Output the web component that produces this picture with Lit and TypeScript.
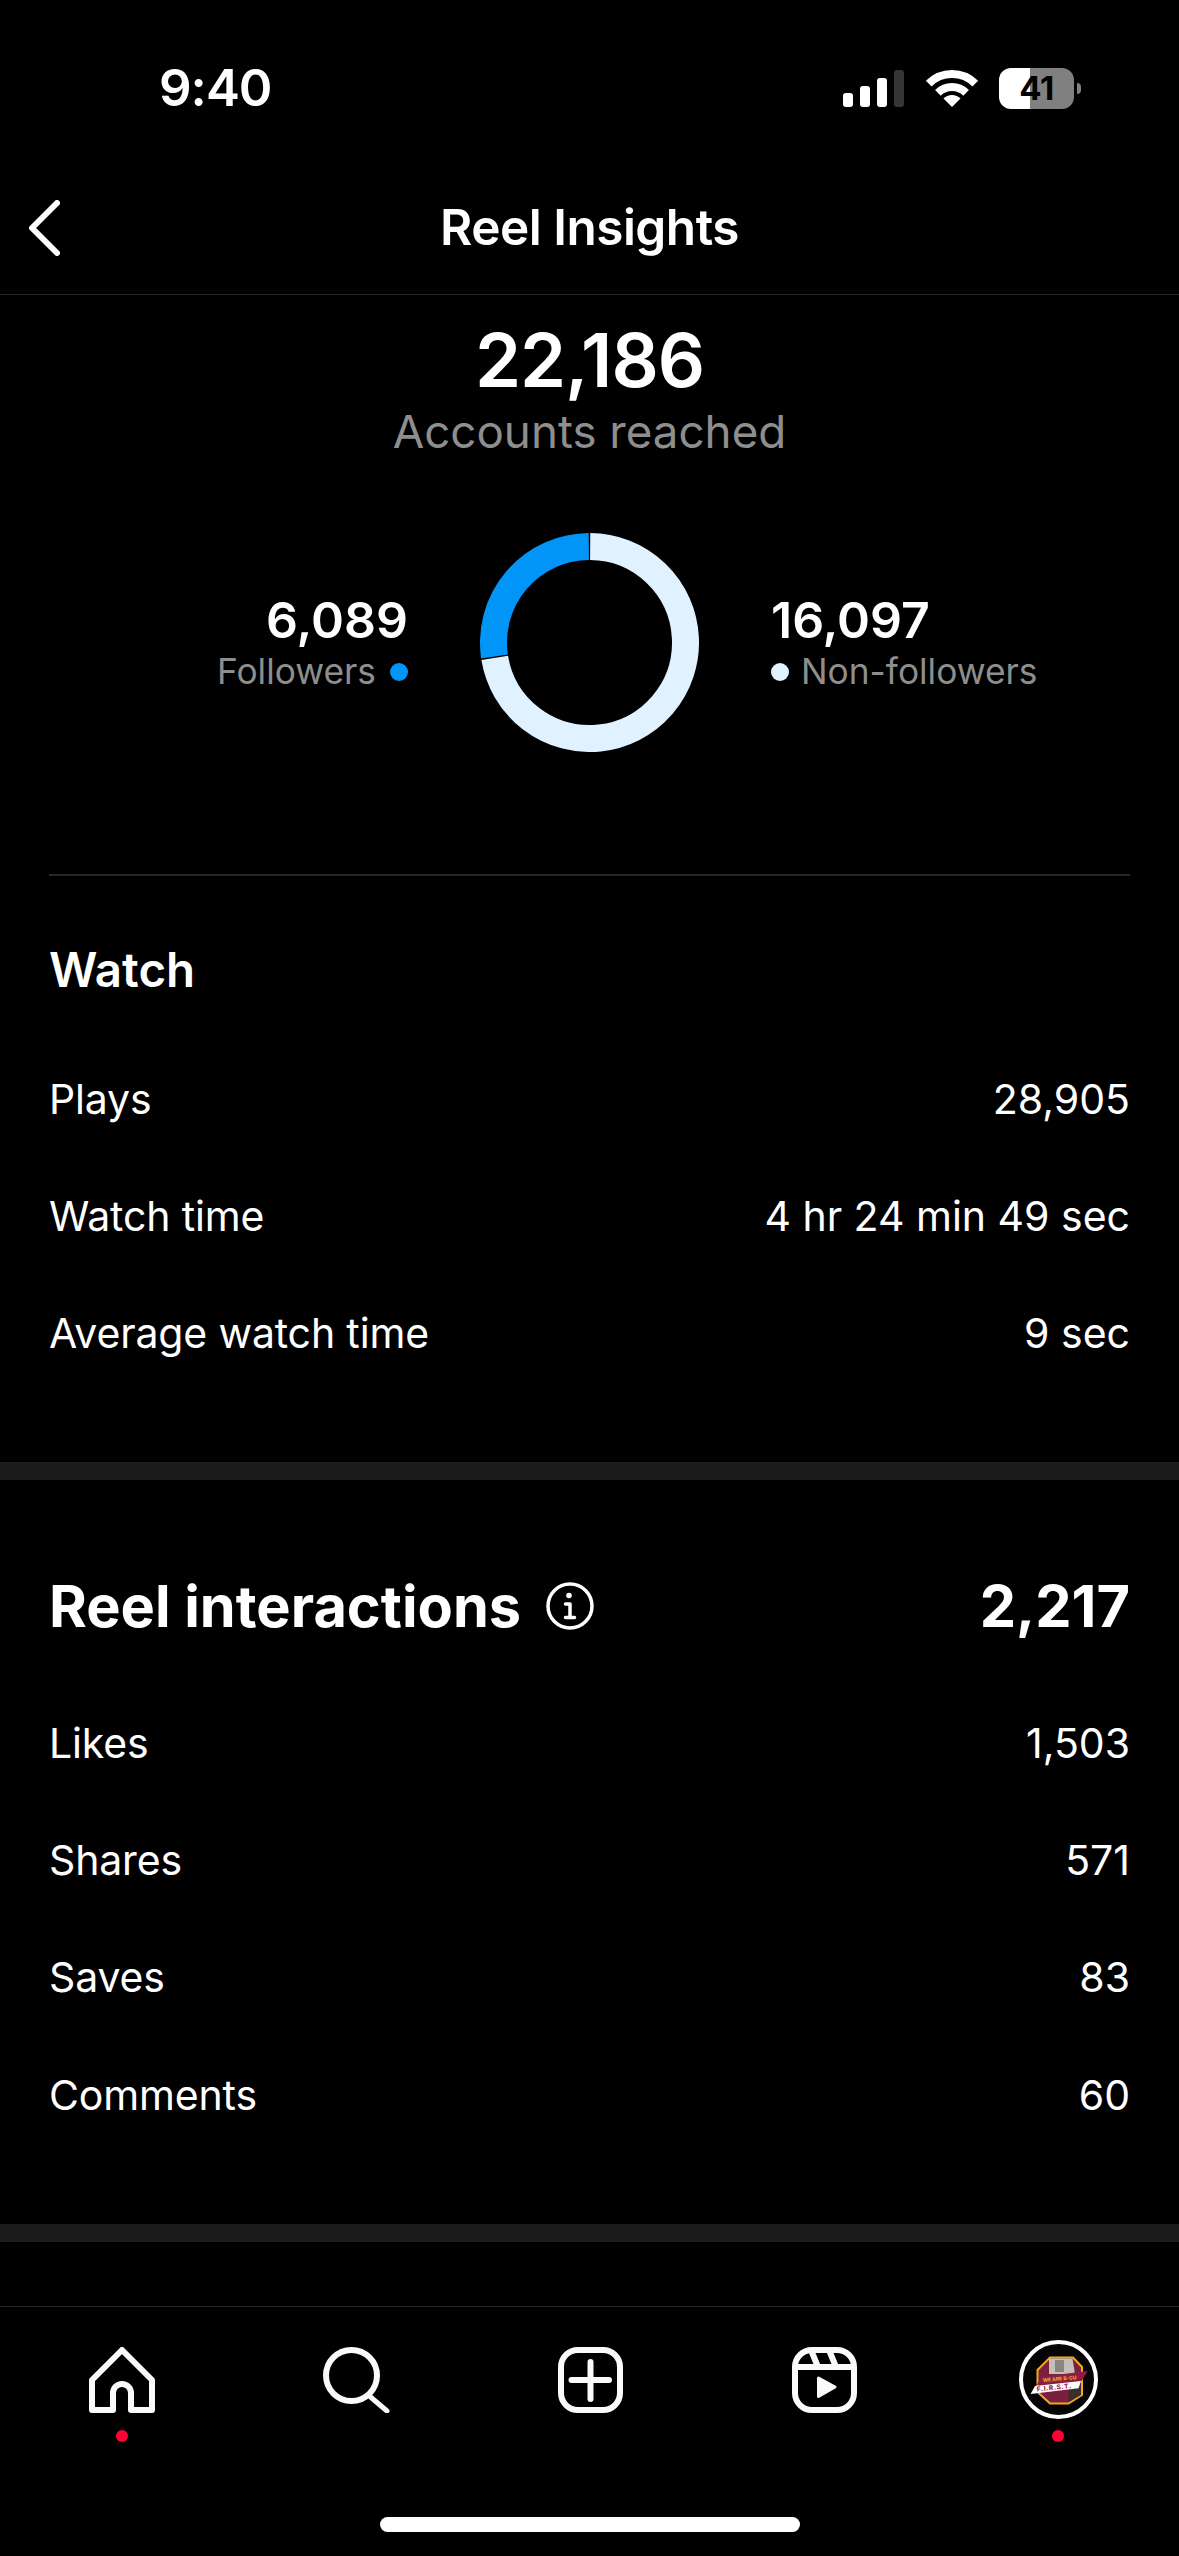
import { LitElement, html, css, svg } from "lit";
import { customElement } from "lit/decorators.js";

interface Stat {
  label: string;
  value: string;
}

const WATCH: Stat[] = [
  { label: "Plays", value: "28,905" },
  { label: "Watch time", value: "4 hr 24 min 49 sec" },
  { label: "Average watch time", value: "9 sec" },
];

const INTERACTIONS: Stat[] = [
  { label: "Likes", value: "1,503" },
  { label: "Shares", value: "571" },
  { label: "Saves", value: "83" },
  { label: "Comments", value: "60" },
];

const FOLLOWERS = 6089;
const NON_FOLLOWERS = 16097;

// arc of the donut, clockwise from `from` to `to` in degrees, 0 at the top
function arc(from: number, to: number, r: number) {
  const pt = (a: number) => {
    const rad = ((a - 90) * Math.PI) / 180;
    return `${109.5 + r * Math.cos(rad)} ${109.5 + r * Math.sin(rad)}`;
  };
  const large = to - from > 180 ? 1 : 0;
  return `M${pt(from)} A${r} ${r} 0 ${large} 1 ${pt(to)}`;
}

const homeIcon = svg`<svg width="66" height="66" viewBox="0 0 66 66" fill="none" stroke="#fafafa" stroke-width="6" stroke-linejoin="round"><path d="M33 3 L3 33 V63 H24 V46 a9 9 0 0 1 18 0 V63 H63 V33 Z"/></svg>`;
const searchIcon = svg`<svg width="67" height="66" viewBox="0 0 67 66" fill="none" stroke="#fafafa" stroke-width="6" stroke-linecap="round"><circle cx="28.5" cy="28.5" r="25.5"/><path d="M47.5 50 L64 64" stroke-width="5"/></svg>`;
const addIcon = svg`<svg width="65" height="66" viewBox="0 0 65 66" fill="none" stroke="#fafafa" stroke-width="6" stroke-linecap="round"><rect x="3" y="3" width="59" height="60" rx="17"/><path d="M13.5 33 H51 M32.5 15 V52"/></svg>`;
const reelsIcon = svg`<svg width="65" height="66" viewBox="0 0 65 66" fill="none" stroke="#fafafa" stroke-width="6"><rect x="3" y="3" width="59" height="60" rx="17"/><path d="M3 20 H62 M19 3 L26 20 M37 3 L44 20"/><path d="M26.5 31 L43 40 L26.5 49.5 Z" fill="#fafafa" stroke-width="3" stroke-linejoin="round"/></svg>`;

const avatar = svg`<svg width="79" height="79" viewBox="0 0 79 79">
  <circle cx="39.5" cy="39.5" r="37.5" fill="#050505" stroke="#fff" stroke-width="4"/>
  <path d="M31 17.5 H54 L63 27 V55 L49.5 63.5 H31 L18.5 52 V30 Z" fill="#7a1f3d" stroke="#f0a81e" stroke-width="2"/>
  <path d="M30 18.5 H53.5 L56 34 H30 Z" fill="#c4bfb8"/>
  <path d="M36 20 h9 v12 h-9 Z" fill="#8b8580"/>
  <path d="M50 44 L62 42 V55 L49.5 62 Z" fill="#3a2f2c"/>
  <path d="M21.8 36.7 L68.8 31 L62.6 41 L17.9 45 Z" fill="#8f1d42"/>
  <path d="M16 46 L62 41 L59.6 48.3 L11.6 54 Z" fill="#fff"/>
  <text x="24" y="42" font-family="Inter, sans-serif" font-size="5" font-weight="700" fill="#f0b52c" transform="rotate(-5 24 42)">WE ARE B-CU</text>
  <text x="18" y="51.5" font-family="Inter, sans-serif" font-size="6.6" font-weight="800" letter-spacing="0.5" fill="#a3174a" transform="rotate(-6 18 51.5)">F.I.R.S.T.</text>
</svg>`;

@customElement("app-root")
export class AppRoot extends LitElement {
  private renderRows(rows: Stat[]) {
    return rows.map(
      (r) => html`<div class="row"><span class="label">${r.label}</span><span>${r.value}</span></div>`
    );
  }

  private renderDonut() {
    const split = (FOLLOWERS / (FOLLOWERS + NON_FOLLOWERS)) * 360;
    return html`<svg class="donut" width="219" height="219" viewBox="0 0 219 219" fill="none" stroke-width="27">
      <path d=${arc(0.4, 360 - split - 0.4, 96)} stroke="#e0f1ff"/>
      <path d=${arc(360 - split + 0.4, 359.6, 96)} stroke="#0095f6"/>
    </svg>`;
  }

  render() {
    return html`
      <div class="screen">
        <div class="status">
          <span class="time">9:40</span>
          <div class="status-icons">
            <div class="signal">
              <i class="b1"></i><i class="b2"></i><i class="b3"></i><i class="b4"></i>
            </div>
            <svg class="wifi" width="50" height="37" viewBox="0 0 50 37" fill="none" stroke="#fff" stroke-width="8">
              <path d="M1.7 13.7 A33 33 0 0 1 48.3 13.7"/>
              <path d="M10.9 22.9 A20 20 0 0 1 39.1 22.9"/>
              <path d="M25 37 L16.5 28.5 A12 12 0 0 1 33.5 28.5 Z" fill="#fff" stroke="none"/>
            </svg>
            <div class="battery"><span>41</span></div>
            <div class="battery-cap"></div>
          </div>
        </div>

        <header class="title-bar">
          <svg class="back" width="32" height="56" viewBox="0 0 32 56" fill="none" stroke="#fff" stroke-width="6" stroke-linecap="round" stroke-linejoin="round">
            <path d="M29 3 L4 28 L29 53"/>
          </svg>
          <h1>Reel Insights</h1>
        </header>

        <section class="summary">
          <div class="total">22,186</div>
          <div class="total-label">Accounts reached</div>
          <div class="split">
            <div class="side left">
              <div class="num">6,089</div>
              <div class="legend">Followers<i class="dot blue"></i></div>
            </div>
            ${this.renderDonut()}
            <div class="side">
              <div class="num">16,097</div>
              <div class="legend"><i class="dot pale"></i>Non-followers</div>
            </div>
          </div>
        </section>

        <div class="divider"></div>

        <section class="watch">
          <h2>Watch</h2>
          <div class="rows">${this.renderRows(WATCH)}</div>
        </section>

        <div class="band"></div>

        <section class="interactions">
          <div class="big-head">
            <div class="big-title">
              <span>Reel interactions</span>
              <svg width="48" height="48" viewBox="0 0 48 48" fill="none" stroke="#fff" stroke-width="3.5" stroke-linecap="round" stroke-linejoin="round">
                <circle cx="24" cy="24" r="22"/>
                <path d="M19.5 22 H24 V35 M19.5 35.5 H28.5"/>
                <circle cx="23" cy="13.5" r="2.8" fill="#fff" stroke="none"/>
              </svg>
            </div>
            <span>2,217</span>
          </div>
          <div class="rows">${this.renderRows(INTERACTIONS)}</div>
        </section>

        <div class="band"></div>
        <div class="spacer"></div>

        <nav class="tabbar">
          <div class="tabs">
            <div class="tab"><div class="tab-icon">${homeIcon}</div><i class="alert"></i></div>
            <div class="tab"><div class="tab-icon">${searchIcon}</div></div>
            <div class="tab"><div class="tab-icon">${addIcon}</div></div>
            <div class="tab"><div class="tab-icon">${reelsIcon}</div></div>
            <div class="tab"><div class="tab-icon">${avatar}</div><i class="alert"></i></div>
          </div>
          <div class="home-indicator"></div>
        </nav>
      </div>
    `;
  }

  static styles = css`
    :host {
      display: block;
      width: 1179px;
      background: #000;
      color: #fff;
      font-family: Inter, "Liberation Sans", sans-serif;
    }

    .screen {
      display: flex;
      flex-direction: column;
      width: 1179px;
      height: 2556px;
      background: #000;
      overflow: hidden;
    }

    .status {
      display: flex;
      align-items: center;
      justify-content: space-between;
      box-sizing: border-box;
      height: 160px;
      padding: 16px 98px 0 159px;
    }

    .time {
      font-size: 51px;
      font-weight: 600;
      letter-spacing: -1px;
      line-height: 60px;
    }

    .status-icons {
      display: flex;
      align-items: center;
    }

    .signal {
      display: flex;
      align-items: flex-end;
      gap: 7px;
      height: 37px;
      margin-right: 23px;
    }

    .signal i {
      display: block;
      width: 10px;
      border-radius: 3px;
      background: #fff;
    }

    .signal .b1 { height: 14px; }
    .signal .b2 { height: 21px; }
    .signal .b3 { height: 29px; }
    .signal .b4 { height: 37px; background: #363636; }

    .wifi {
      margin-right: 22px;
      overflow: visible;
    }

    .battery {
      display: flex;
      align-items: center;
      justify-content: center;
      width: 75px;
      height: 41px;
      border-radius: 12px;
      background: linear-gradient(90deg, #fff 0 41%, #808080 41% 100%);
      color: #000;
      font-size: 33px;
      font-weight: 700;
      letter-spacing: -0.5px;
    }

    .battery-cap {
      width: 4px;
      height: 11px;
      margin-left: 3px;
      border-radius: 0 6px 6px 0;
      background: #808080;
    }

    .title-bar {
      display: flex;
      align-items: center;
      justify-content: center;
      position: relative;
      box-sizing: content-box;
      height: 134px;
      border-bottom: 1px solid #262626;
    }

    .back {
      position: absolute;
      left: 28px;
      top: 40px;
    }

    h1 {
      margin: 0;
      font-size: 49.5px;
      font-weight: 600;
      letter-spacing: -0.5px;
      line-height: 60px;
    }

    .summary {
      padding-top: 25px;
      text-align: center;
    }

    .total {
      font-size: 74px;
      font-weight: 600;
      letter-spacing: -1px;
      line-height: 80px;
    }

    .total-label {
      margin-top: 4px;
      color: #8e8e8e;
      font-size: 45.7px;
      line-height: 56px;
    }

    .split {
      display: grid;
      grid-template-columns: 1fr 219px 1fr;
      align-items: center;
      column-gap: 72px;
      margin-top: 73px;
    }

    .side {
      text-align: left;
    }

    .side.left {
      text-align: right;
    }

    .donut {
      display: block;
    }

    .num {
      font-size: 50px;
      font-weight: 600;
      line-height: 56px;
    }

    .legend {
      display: flex;
      align-items: center;
      gap: 12px;
      margin-top: 2px;
      color: #8e8e8e;
      font-size: 35.3px;
      line-height: 44px;
    }

    .left .legend {
      justify-content: flex-end;
      gap: 14px;
    }

    .dot {
      display: block;
      width: 18px;
      height: 18px;
      border-radius: 50%;
    }

    .dot.blue { background: #0095f6; }
    .dot.pale { background: #e0f1ff; }

    .divider {
      height: 2px;
      margin: 122px 49px 0;
      background: #262626;
    }

    .watch {
      padding: 64px 49px 70px;
    }

    h2 {
      margin: 0;
      font-size: 47.5px;
      font-weight: 600;
      line-height: 60px;
    }

    .watch .rows {
      margin-top: 40px;
    }

    .row {
      display: flex;
      align-items: center;
      justify-content: space-between;
      height: 117.33px;
      font-size: 41px;
      line-height: 50px;
    }

    .row .label {
      letter-spacing: -0.15px;
    }

    .band {
      flex: none;
      height: 18px;
      background: #1c1c1c;
    }

    .interactions {
      padding: 91px 49px 71px;
    }

    .big-head {
      display: flex;
      align-items: center;
      justify-content: space-between;
      height: 70px;
      font-size: 57.7px;
      font-weight: 700;
    }

    .big-title {
      display: flex;
      align-items: center;
      gap: 25px;
    }

    .interactions .rows {
      margin-top: 43px;
    }

    .spacer {
      flex: 1;
    }

    .tabbar {
      display: flex;
      flex-direction: column;
      flex: none;
      box-sizing: border-box;
      height: 250px;
      padding-top: 33px;
      border-top: 1px solid #262626;
    }

    .tabs {
      display: grid;
      grid-template-columns: repeat(5, 234px);
      padding-left: 5px;
      height: 102px;
    }

    .tab {
      display: flex;
      flex-direction: column;
      align-items: center;
    }

    .tab-icon {
      display: flex;
      align-items: center;
      justify-content: center;
      height: 79px;
    }

    .tab-icon svg {
      display: block;
    }

    .alert {
      display: block;
      width: 12px;
      height: 12px;
      margin-top: 11px;
      border-radius: 50%;
      background: #ff0334;
    }

    .home-indicator {
      width: 420px;
      height: 15px;
      margin: 75px auto 0;
      border-radius: 8px;
      background: #fff;
    }
  `;
}

declare global {
  interface HTMLElementTagNameMap {
    "app-root": AppRoot;
  }
}
